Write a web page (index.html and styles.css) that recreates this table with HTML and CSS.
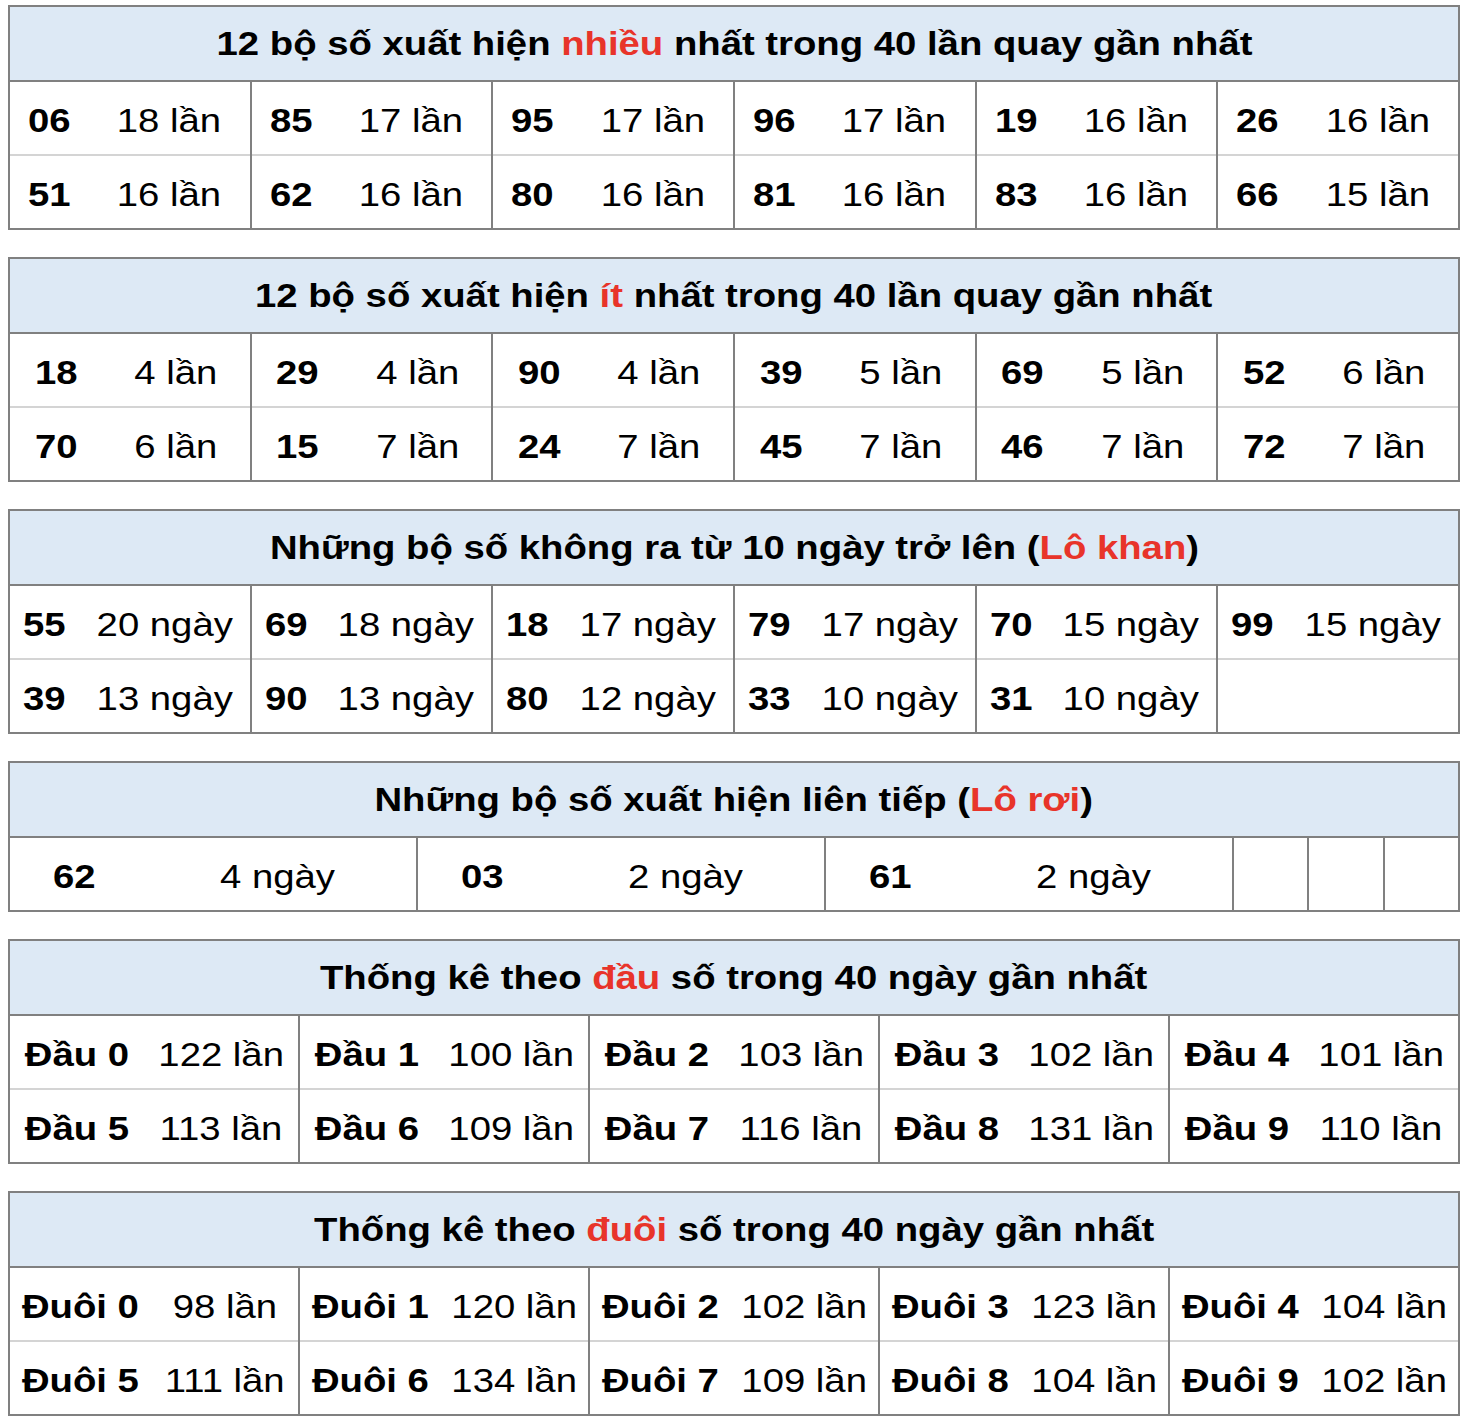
FILE: index.html
```html
<!DOCTYPE html>
<html lang="vi">
<head>
<meta charset="utf-8">
<title>Thống kê lô tô</title>
<link rel="stylesheet" href="styles.css">
</head>
<body>
<main class="page">

<table class="stat t1">
<colgroup><col class="n"><col class="c"><col class="n"><col class="c"><col class="n"><col class="c"><col class="n"><col class="c"><col class="n"><col class="c"><col class="n"><col class="c"></colgroup>
<thead><tr><th colspan="12"><span class="sx">12 bộ số xuất hiện <span class="hl">nhiều</span> nhất trong 40 lần quay gần nhất</span></th></tr></thead>
<tbody>
<tr><td class="num"><span class="sx">06</span></td><td class="cnt"><span class="sx">18 lần</span></td><td class="num"><span class="sx">85</span></td><td class="cnt"><span class="sx">17 lần</span></td><td class="num"><span class="sx">95</span></td><td class="cnt"><span class="sx">17 lần</span></td><td class="num"><span class="sx">96</span></td><td class="cnt"><span class="sx">17 lần</span></td><td class="num"><span class="sx">19</span></td><td class="cnt"><span class="sx">16 lần</span></td><td class="num"><span class="sx">26</span></td><td class="cnt"><span class="sx">16 lần</span></td></tr>
<tr><td class="num"><span class="sx">51</span></td><td class="cnt"><span class="sx">16 lần</span></td><td class="num"><span class="sx">62</span></td><td class="cnt"><span class="sx">16 lần</span></td><td class="num"><span class="sx">80</span></td><td class="cnt"><span class="sx">16 lần</span></td><td class="num"><span class="sx">81</span></td><td class="cnt"><span class="sx">16 lần</span></td><td class="num"><span class="sx">83</span></td><td class="cnt"><span class="sx">16 lần</span></td><td class="num"><span class="sx">66</span></td><td class="cnt"><span class="sx">15 lần</span></td></tr>
</tbody>
</table>

<table class="stat t2">
<colgroup><col class="n"><col class="c"><col class="n"><col class="c"><col class="n"><col class="c"><col class="n"><col class="c"><col class="n"><col class="c"><col class="n"><col class="c"></colgroup>
<thead><tr><th colspan="12"><span class="sx">12 bộ số xuất hiện <span class="hl">ít</span> nhất trong 40 lần quay gần nhất</span></th></tr></thead>
<tbody>
<tr><td class="num"><span class="sx">18</span></td><td class="cnt"><span class="sx">4 lần</span></td><td class="num"><span class="sx">29</span></td><td class="cnt"><span class="sx">4 lần</span></td><td class="num"><span class="sx">90</span></td><td class="cnt"><span class="sx">4 lần</span></td><td class="num"><span class="sx">39</span></td><td class="cnt"><span class="sx">5 lần</span></td><td class="num"><span class="sx">69</span></td><td class="cnt"><span class="sx">5 lần</span></td><td class="num"><span class="sx">52</span></td><td class="cnt"><span class="sx">6 lần</span></td></tr>
<tr><td class="num"><span class="sx">70</span></td><td class="cnt"><span class="sx">6 lần</span></td><td class="num"><span class="sx">15</span></td><td class="cnt"><span class="sx">7 lần</span></td><td class="num"><span class="sx">24</span></td><td class="cnt"><span class="sx">7 lần</span></td><td class="num"><span class="sx">45</span></td><td class="cnt"><span class="sx">7 lần</span></td><td class="num"><span class="sx">46</span></td><td class="cnt"><span class="sx">7 lần</span></td><td class="num"><span class="sx">72</span></td><td class="cnt"><span class="sx">7 lần</span></td></tr>
</tbody>
</table>

<table class="stat t3">
<colgroup><col class="n"><col class="c"><col class="n"><col class="c"><col class="n"><col class="c"><col class="n"><col class="c"><col class="n"><col class="c"><col class="n"><col class="c"></colgroup>
<thead><tr><th colspan="12"><span class="sx">Những bộ số không ra từ 10 ngày trở lên (<span class="hl">Lô khan</span>)</span></th></tr></thead>
<tbody>
<tr><td class="num"><span class="sx">55</span></td><td class="cnt"><span class="sx">20 ngày</span></td><td class="num"><span class="sx">69</span></td><td class="cnt"><span class="sx">18 ngày</span></td><td class="num"><span class="sx">18</span></td><td class="cnt"><span class="sx">17 ngày</span></td><td class="num"><span class="sx">79</span></td><td class="cnt"><span class="sx">17 ngày</span></td><td class="num"><span class="sx">70</span></td><td class="cnt"><span class="sx">15 ngày</span></td><td class="num"><span class="sx">99</span></td><td class="cnt"><span class="sx">15 ngày</span></td></tr>
<tr><td class="num"><span class="sx">39</span></td><td class="cnt"><span class="sx">13 ngày</span></td><td class="num"><span class="sx">90</span></td><td class="cnt"><span class="sx">13 ngày</span></td><td class="num"><span class="sx">80</span></td><td class="cnt"><span class="sx">12 ngày</span></td><td class="num"><span class="sx">33</span></td><td class="cnt"><span class="sx">10 ngày</span></td><td class="num"><span class="sx">31</span></td><td class="cnt"><span class="sx">10 ngày</span></td><td class="num"></td><td class="cnt"></td></tr>
</tbody>
</table>

<table class="stat t4">
<colgroup><col class="n"><col class="c"><col class="n"><col class="c"><col class="n"><col class="c"><col class="e"><col class="e"><col class="e"></colgroup>
<thead><tr><th colspan="9"><span class="sx">Những bộ số xuất hiện liên tiếp (<span class="hl">Lô rơi</span>)</span></th></tr></thead>
<tbody>
<tr><td class="num"><span class="sx">62</span></td><td class="cnt"><span class="sx">4 ngày</span></td><td class="num"><span class="sx">03</span></td><td class="cnt"><span class="sx">2 ngày</span></td><td class="num"><span class="sx">61</span></td><td class="cnt"><span class="sx">2 ngày</span></td><td class="blank"></td><td class="blank"></td><td class="blank"></td></tr>
</tbody>
</table>

<table class="stat t5">
<colgroup><col class="n"><col class="c"><col class="n"><col class="c"><col class="n"><col class="c"><col class="n"><col class="c"><col class="n"><col class="c"></colgroup>
<thead><tr><th colspan="10"><span class="sx">Thống kê theo <span class="hl">đầu</span> số trong 40 ngày gần nhất</span></th></tr></thead>
<tbody>
<tr><td class="num"><span class="sx">Đầu 0</span></td><td class="cnt"><span class="sx">122 lần</span></td><td class="num"><span class="sx">Đầu 1</span></td><td class="cnt"><span class="sx">100 lần</span></td><td class="num"><span class="sx">Đầu 2</span></td><td class="cnt"><span class="sx">103 lần</span></td><td class="num"><span class="sx">Đầu 3</span></td><td class="cnt"><span class="sx">102 lần</span></td><td class="num"><span class="sx">Đầu 4</span></td><td class="cnt"><span class="sx">101 lần</span></td></tr>
<tr><td class="num"><span class="sx">Đầu 5</span></td><td class="cnt"><span class="sx">113 lần</span></td><td class="num"><span class="sx">Đầu 6</span></td><td class="cnt"><span class="sx">109 lần</span></td><td class="num"><span class="sx">Đầu 7</span></td><td class="cnt"><span class="sx">116 lần</span></td><td class="num"><span class="sx">Đầu 8</span></td><td class="cnt"><span class="sx">131 lần</span></td><td class="num"><span class="sx">Đầu 9</span></td><td class="cnt"><span class="sx">110 lần</span></td></tr>
</tbody>
</table>

<table class="stat t6">
<colgroup><col class="n"><col class="c"><col class="n"><col class="c"><col class="n"><col class="c"><col class="n"><col class="c"><col class="n"><col class="c"></colgroup>
<thead><tr><th colspan="10"><span class="sx">Thống kê theo <span class="hl">đuôi</span> số trong 40 ngày gần nhất</span></th></tr></thead>
<tbody>
<tr><td class="num"><span class="sx">Đuôi 0</span></td><td class="cnt"><span class="sx">98 lần</span></td><td class="num"><span class="sx">Đuôi 1</span></td><td class="cnt"><span class="sx">120 lần</span></td><td class="num"><span class="sx">Đuôi 2</span></td><td class="cnt"><span class="sx">102 lần</span></td><td class="num"><span class="sx">Đuôi 3</span></td><td class="cnt"><span class="sx">123 lần</span></td><td class="num"><span class="sx">Đuôi 4</span></td><td class="cnt"><span class="sx">104 lần</span></td></tr>
<tr><td class="num"><span class="sx">Đuôi 5</span></td><td class="cnt"><span class="sx">111 lần</span></td><td class="num"><span class="sx">Đuôi 6</span></td><td class="cnt"><span class="sx">134 lần</span></td><td class="num"><span class="sx">Đuôi 7</span></td><td class="cnt"><span class="sx">109 lần</span></td><td class="num"><span class="sx">Đuôi 8</span></td><td class="cnt"><span class="sx">104 lần</span></td><td class="num"><span class="sx">Đuôi 9</span></td><td class="cnt"><span class="sx">102 lần</span></td></tr>
</tbody>
</table>

</main>
</body>
</html>
```

FILE: styles.css
```css
html, body {
  margin: 0;
  padding: 0;
  background: #fff;
}

body {
  font-family: "Liberation Sans", Arial, sans-serif;
  color: #000;
}

.page {
  padding: 5px 0 0 8px;
}

.stat {
  border-collapse: collapse;
  table-layout: fixed;
  width: 1450px;
  border: 2px solid #808080;
  margin: 0 0 27px;
}

.stat th {
  background: #dde9f5;
  height: 73px;
  padding: 0;
  font-size: 33px;
  font-weight: bold;
  text-align: center;
  vertical-align: middle;
  border-bottom: 2px solid #808080;
  white-space: nowrap;
}

.stat td {
  height: 67px;
  padding: 5px 0 0;
  font-size: 33px;
  text-align: center;
  vertical-align: middle;
  white-space: nowrap;
}

.stat tbody tr + tr td {
  border-top: 2px solid #d4d4d4;
}

.num {
  font-weight: bold;
  border-left: 2px solid #808080;
}

.cnt {
  border-right: 2px solid #808080;
}

.blank {
  border-left: 2px solid #808080;
  border-right: 2px solid #808080;
}

.sx {
  display: inline-block;
  transform: scaleX(1.16);
}

.hl {
  color: #e8342a;
}

.t1 col.n { width: 80px; }
.t1 col.c { width: 161.67px; }

.t2 col.n { width: 93px; }
.t2 col.c { width: 148.67px; }

.t3 col.n { width: 70px; }
.t3 col.c { width: 171.67px; }

.t4 col.n { width: 130px; }
.t4 col.c { width: 278px; }
.t4 col.e { width: 75.33px; }

.t5 col.n { width: 135px; }
.t5 col.c { width: 155px; }

.t6 col.n { width: 142px; }
.t6 col.c { width: 148px; }
```
